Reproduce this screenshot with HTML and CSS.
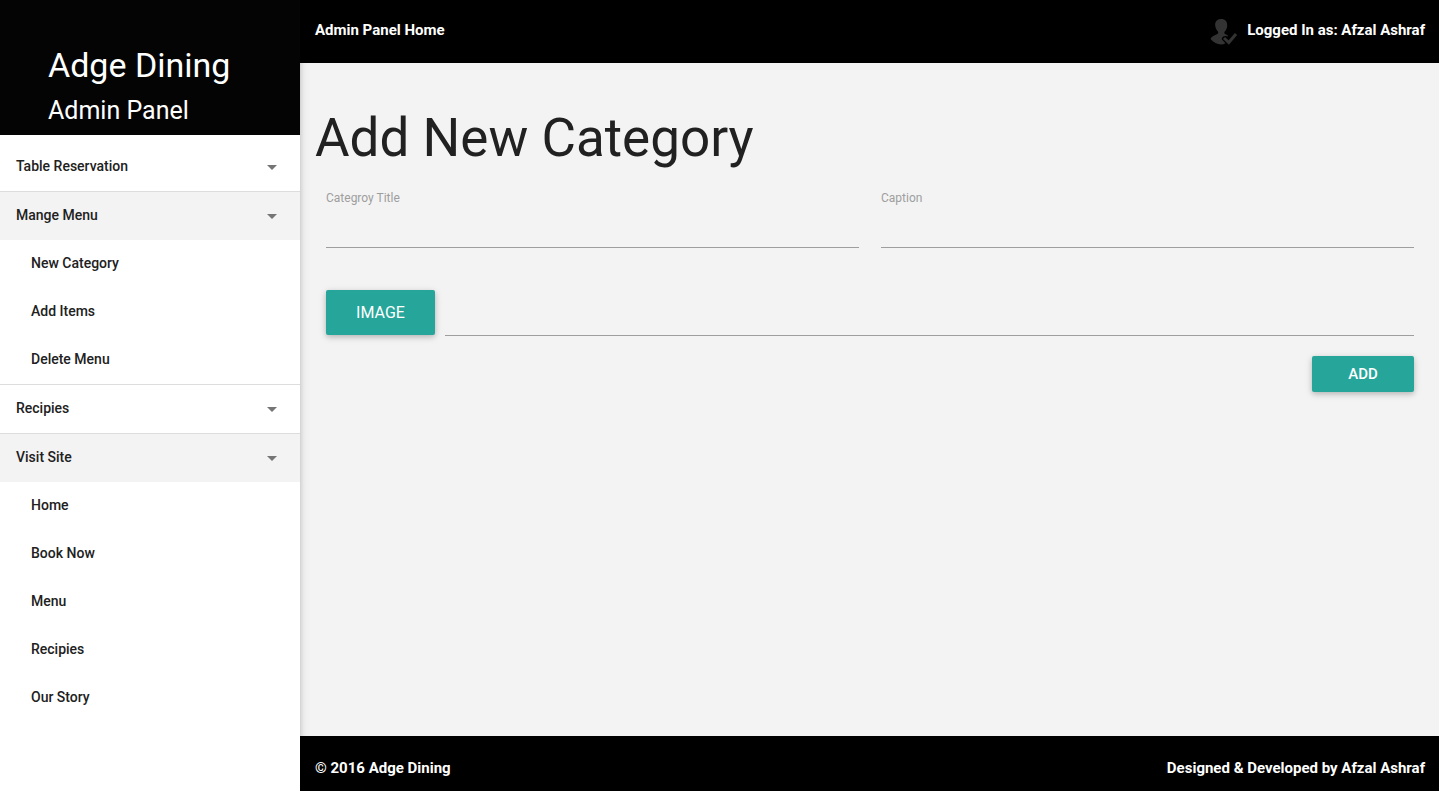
FILE: index.html
```html
<!DOCTYPE html>
<html lang="en">
<head>
<meta charset="utf-8">
<meta name="viewport" content="width=device-width, initial-scale=1">
<title>Adge Dining Admin Panel</title>
<link rel="stylesheet" href="styles.css">
</head>
<body>
<div class="layout">
  <aside class="sidebar">
    <header class="brand">
      <p class="brand-name">Adge Dining</p>
      <p class="brand-role">Admin Panel</p>
    </header>
    <nav class="menu">
      <section class="group">
        <button class="toggle" type="button" aria-expanded="false">Table Reservation<svg class="caret" viewBox="0 0 10 5" aria-hidden="true"><path d="M0 0h10L5 5z"/></svg></button>
      </section>
      <section class="group">
        <button class="toggle is-open" type="button" aria-expanded="true">Mange Menu<svg class="caret" viewBox="0 0 10 5" aria-hidden="true"><path d="M0 0h10L5 5z"/></svg></button>
        <ul class="links">
          <li><a class="link" href="#new-category">New Category</a></li>
          <li><a class="link" href="#add-items">Add Items</a></li>
          <li><a class="link" href="#delete-menu">Delete Menu</a></li>
        </ul>
      </section>
      <section class="group">
        <button class="toggle" type="button" aria-expanded="false">Recipies<svg class="caret" viewBox="0 0 10 5" aria-hidden="true"><path d="M0 0h10L5 5z"/></svg></button>
      </section>
      <section class="group">
        <button class="toggle is-open" type="button" aria-expanded="true">Visit Site<svg class="caret" viewBox="0 0 10 5" aria-hidden="true"><path d="M0 0h10L5 5z"/></svg></button>
        <ul class="links">
          <li><a class="link" href="#home">Home</a></li>
          <li><a class="link" href="#book">Book Now</a></li>
          <li><a class="link" href="#menu">Menu</a></li>
          <li><a class="link" href="#recipes">Recipies</a></li>
          <li><a class="link" href="#story">Our Story</a></li>
        </ul>
      </section>
    </nav>
  </aside>
  <div class="page">
    <header class="topbar">
      <a class="bar-text" href="#panel">Admin Panel Home</a>
      <div class="account">
        <svg class="account-icon" viewBox="0 0 28 28" aria-hidden="true">
          <path class="figure" d="M11 2C6.800 2 4.800 5 5.200 8.600c.2 2.600 1.300 4.300 2.700 6 .7 1.100.3 2.100-1 2.700-3 1.300-5.700 2.500-6.400 4.700C3.500 25.400 7 27.400 11 27.400c2 0 3.200-.4 4.400-1.200l-3.700-3.900c.1-2.200 1.900-3.700 4.400-3.300l1.700.6-.2-1.300c-2-.7-4-1.700-3.200-3.200 1.600-1.900 2.600-3.700 2.800-6.200C17.500 4.700 15.200 2 11 2z"/>
          <path class="check" d="M14 21l4.800 4.500 7.200-8.500"/>
        </svg>
        <span class="bar-text">Logged In as: Afzal Ashraf</span>
      </div>
    </header>
    <main class="content">
      <h1 class="title">Add New Category</h1>
      <form class="form">
        <div class="fields">
          <div class="field">
            <label class="label" for="category-title">Categroy Title</label>
            <input class="input" id="category-title" type="text">
          </div>
          <div class="field">
            <label class="label" for="caption">Caption</label>
            <input class="input" id="caption" type="text">
          </div>
        </div>
        <div class="file-row">
          <button class="button button-image" type="button">IMAGE</button>
          <input class="input" type="text" aria-label="Image file" readonly>
        </div>
        <div class="actions">
          <button class="button button-add" type="submit">ADD</button>
        </div>
      </form>
    </main>
    <footer class="footer">
      <span class="bar-text">© 2016 Adge Dining</span>
      <span class="bar-text">Designed &amp; Developed by Afzal Ashraf</span>
    </footer>
  </div>
</div>
</body>
</html>
```
FILE: styles.css
```css
* { box-sizing: border-box; }

body {
  margin: 0;
  background: #f3f3f3;
  color: #212121;
  font-family: Roboto, sans-serif;
  font-size: 15px;
}

button, input { font: inherit; }

.layout {
  display: grid;
  grid-template-columns: 300px 1fr;
  min-height: 100vh;
}

.sidebar {
  z-index: 1;
  background: #fff;
  box-shadow: 0 2px 5px rgba(0, 0, 0, 0.16), 0 2px 10px rgba(0, 0, 0, 0.12);
}

.brand {
  padding: 40px 48px 4px;
  background: #040404;
  color: #fff;
}

.brand-name, .brand-role { margin: 0; }

.brand-name {
  font-size: 34px;
  line-height: 51px;
}

.brand-role {
  font-size: 25px;
  line-height: 40px;
}

.menu { padding-top: 8px; }

.group + .group { border-top: 1px solid #ddd; }

.toggle {
  display: flex;
  align-items: center;
  justify-content: space-between;
  width: 100%;
  height: 48px;
  padding: 0 23px 2px 16px;
  border: 0;
  background: #fff;
  color: #212121;
  font-size: 14px;
  font-weight: 500;
  text-align: left;
}

.toggle.is-open { background: #f3f3f3; }

.caret {
  width: 10px;
  height: 5px;
  margin-top: 2px;
  fill: #757575;
}

.links {
  margin: 0;
  padding: 0;
  list-style: none;
}

.link {
  display: block;
  padding: 0 16px 2px 31px;
  color: #212121;
  font-size: 14px;
  font-weight: 500;
  line-height: 46px;
  text-decoration: none;
}

.page {
  display: flex;
  flex-direction: column;
}

.topbar {
  display: flex;
  align-items: center;
  justify-content: space-between;
  height: 63px;
  padding: 0 14px 3px 15px;
  background: #000;
}

.bar-text {
  color: #fff;
  font-size: 15px;
  font-weight: 700;
  text-decoration: none;
}

.account {
  display: flex;
  align-items: center;
  gap: 9px;
}

.account-icon {
  width: 28px;
  height: 28px;
  margin-top: 2px;
}

.figure { fill: #333; }

.check {
  fill: none;
  stroke: #333;
  stroke-width: 3;
}

.content {
  flex: 1;
  padding: 40px 15px 0;
}

.title {
  margin: 0;
  font-size: 53px;
  font-weight: 400;
  line-height: 70px;
}

.form { padding: 17px 10px 0 11px; }

.fields {
  display: grid;
  grid-template-columns: 1fr 1fr;
  gap: 22px;
}

.field {
  display: flex;
  flex-direction: column;
}

.label {
  color: #9e9e9e;
  font-size: 12px;
  line-height: 16px;
}

.input {
  width: 100%;
  height: 42px;
  padding: 0;
  border: 0;
  border-bottom: 1px solid #9e9e9e;
  border-radius: 0;
  outline: 0;
  background: transparent;
}

.file-row {
  display: flex;
  align-items: flex-end;
  gap: 10px;
  height: 46px;
  margin-top: 42px;
}

.button {
  flex: none;
  border: 0;
  border-radius: 2px;
  background: #26a69a;
  color: #fff;
  font-size: 15px;
  box-shadow: 0 2px 5px rgba(0, 0, 0, 0.16), 0 2px 8px rgba(0, 0, 0, 0.12);
}

.button-image {
  align-self: flex-start;
  width: 109px;
  height: 45px;
  padding-bottom: 2px;
  font-size: 16px;
}

.button-add {
  width: 102px;
  height: 36px;
  font-weight: 500;
}

.actions {
  display: flex;
  justify-content: flex-end;
  margin-top: 20px;
}

.footer {
  display: flex;
  align-items: center;
  justify-content: space-between;
  height: 55px;
  padding: 8px 14px 0 15px;
  background: #000;
}
```
